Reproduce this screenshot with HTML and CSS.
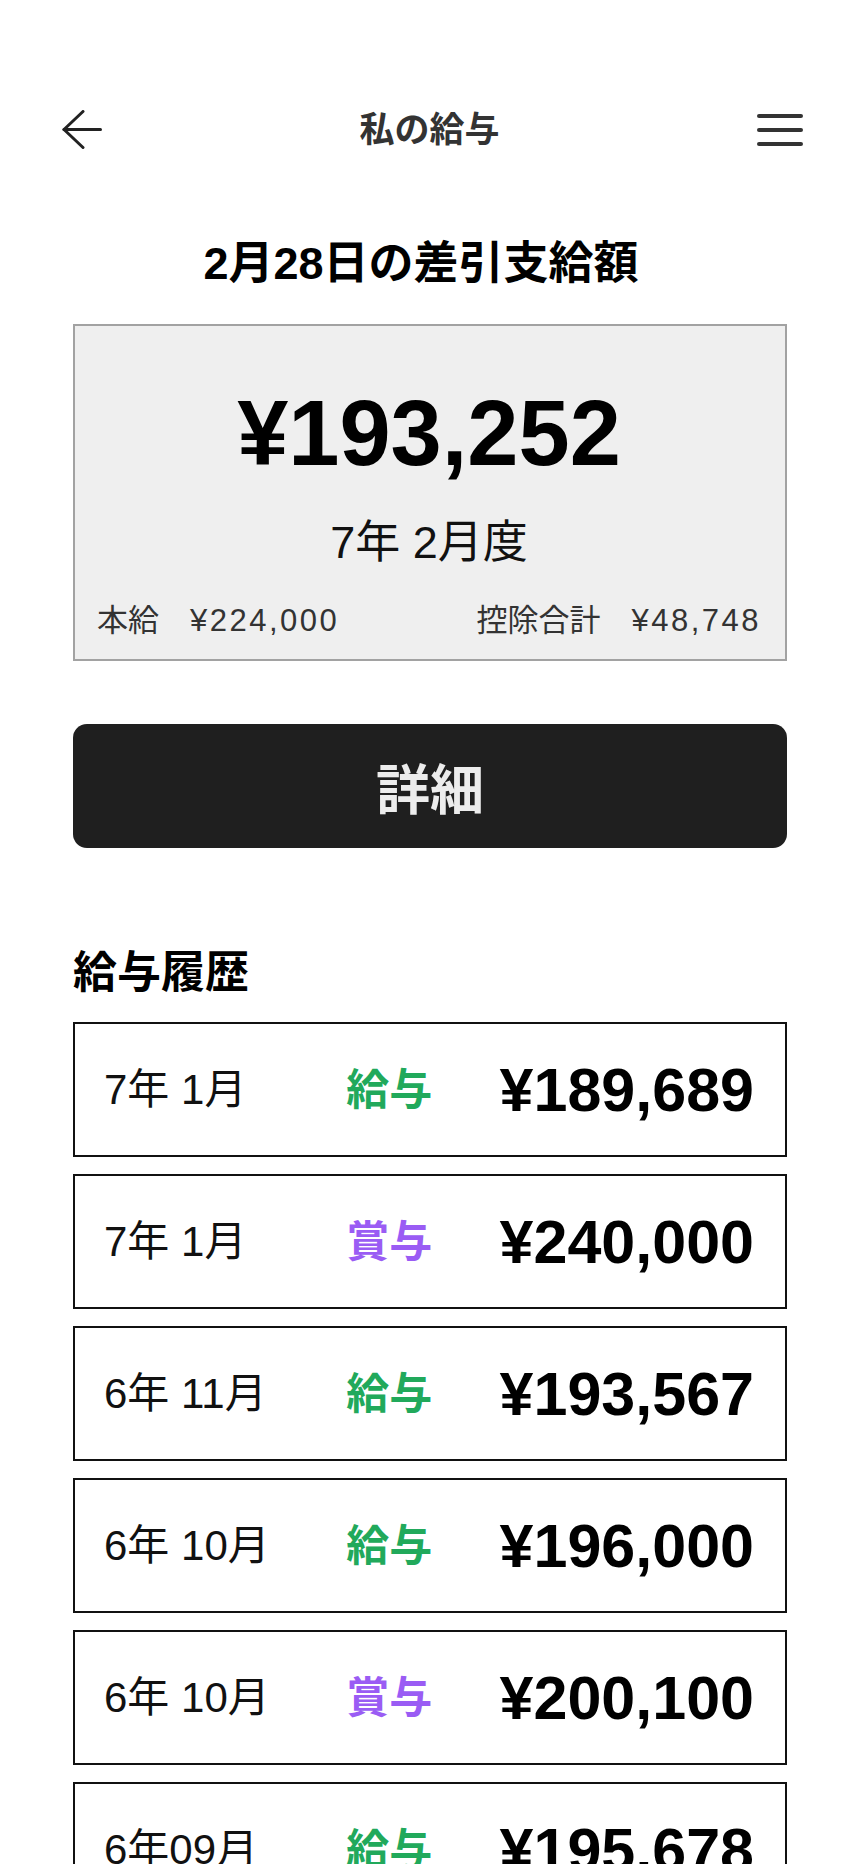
FILE: index.html
```html
<!DOCTYPE html>
<html lang="ja">
<head>
<meta charset="utf-8">
<title>私の給与</title>
<link rel="stylesheet" href="styles.css">
</head>
<body>
<header class="topbar">
  <button class="icon-btn" aria-label="戻る">
    <svg class="icon-back" width="40" height="40" viewBox="0 0 40 40" fill="none" stroke="#222" stroke-width="3" stroke-linecap="round" stroke-linejoin="round">
      <path d="M2 19.5H38.5"/>
      <path d="M21 1.5L2 19.5L21 37.5"/>
    </svg>
  </button>
  <h1 class="title">私の給与</h1>
  <button class="icon-btn" aria-label="メニュー">
    <svg class="icon-menu" width="46" height="32" viewBox="0 0 46 32" fill="none" stroke="#333" stroke-width="4" stroke-linecap="round">
      <path d="M2 2H44"/>
      <path d="M2 16H44"/>
      <path d="M2 30H44"/>
    </svg>
  </button>
</header>

<main class="content">
  <h2 class="pay-heading">2月28日の差引支給額</h2>

  <section class="summary-card">
    <div class="net-amount">¥193,252</div>
    <div class="period">7年 2月度</div>
    <div class="breakdown">
      <span class="breakdown-item">本給　<span class="num">¥224,000</span></span>
      <span class="breakdown-item">控除合計　<span class="num">¥48,748</span></span>
    </div>
  </section>

  <button class="detail-btn">詳細</button>

  <h2 class="history-heading">給与履歴</h2>

  <ul class="history-list">
    <li class="history-row">
      <span class="row-date">7年 1月</span>
      <span class="row-type salary">給与</span>
      <span class="row-amount">¥189,689</span>
    </li>
    <li class="history-row">
      <span class="row-date">7年 1月</span>
      <span class="row-type bonus">賞与</span>
      <span class="row-amount">¥240,000</span>
    </li>
    <li class="history-row">
      <span class="row-date">6年 11月</span>
      <span class="row-type salary">給与</span>
      <span class="row-amount">¥193,567</span>
    </li>
    <li class="history-row">
      <span class="row-date">6年 10月</span>
      <span class="row-type salary">給与</span>
      <span class="row-amount">¥196,000</span>
    </li>
    <li class="history-row">
      <span class="row-date">6年 10月</span>
      <span class="row-type bonus">賞与</span>
      <span class="row-amount">¥200,100</span>
    </li>
    <li class="history-row">
      <span class="row-date">6年09月</span>
      <span class="row-type salary">給与</span>
      <span class="row-amount">¥195,678</span>
    </li>
  </ul>
</main>
</body>
</html>
```

FILE: styles.css
```css
* {
  box-sizing: border-box;
}

html, body {
  margin: 0;
  padding: 0;
  background: #ffffff;
}

body {
  font-family: "Liberation Sans", "Noto Sans CJK JP", sans-serif;
  color: #111;
}

/* ---------- header ---------- */
.topbar {
  display: flex;
  align-items: center;
  height: 170px;
  padding: 90px 57px 0 62px;
}

.icon-btn {
  border: 0;
  background: none;
  padding: 0;
  margin: 0;
  display: flex;
  align-items: center;
  cursor: pointer;
}

.icon-back,
.icon-menu {
  display: block;
}

.title {
  flex: 1;
  margin: 0;
  text-align: center;
  font-size: 35px;
  line-height: 40px;
  font-weight: 700;
  color: #333;
}

/* ---------- content ---------- */
.content {
  width: 714px;
  margin: 0 auto;
}

.pay-heading {
  margin: 68px 0 0;
  padding-right: 18px;
  text-align: center;
  font-size: 45px;
  line-height: 52px;
  font-weight: 700;
  color: #000;
}

.summary-card {
  margin-top: 34px;
  background: #efefef;
  border: 2px solid #a2a2a2;
  padding: 61px 24px 23px 22px;
  display: flex;
  flex-direction: column;
  align-items: center;
}

.net-amount {
  font-size: 92px;
  line-height: 92px;
  font-weight: 700;
  color: #000;
}

.period {
  margin-top: 41px;
  font-size: 45px;
  line-height: 46px;
  color: #111;
}

.breakdown {
  margin-top: 40px;
  align-self: stretch;
  display: flex;
  justify-content: space-between;
  font-size: 31px;
  line-height: 30px;
  color: #333;
}

.breakdown .num {
  letter-spacing: 2.5px;
}

.detail-btn {
  display: block;
  width: 100%;
  height: 124px;
  margin-top: 63px;
  border: 0;
  border-radius: 14px;
  background: #1f1f1f;
  color: #ececec;
  font-family: inherit;
  font-size: 54px;
  font-weight: 700;
  cursor: pointer;
}

.history-heading {
  margin: 99px 0 0;
  font-size: 44px;
  line-height: 52px;
  font-weight: 700;
  color: #000;
}

.history-list {
  list-style: none;
  margin: 23px 0 0;
  padding: 0;
}

.history-row {
  height: 135px;
  margin-bottom: 17px;
  border: 2px solid #111;
  padding: 0 31px 0 29px;
  display: flex;
  align-items: center;
  justify-content: space-between;
}

.row-date {
  min-width: 175px;
  font-size: 42px;
  line-height: 44px;
  color: #111;
}

.row-type {
  font-size: 43px;
  line-height: 44px;
  font-weight: 700;
}

.row-type.salary {
  color: #21a95b;
}

.row-type.bonus {
  color: #9a5cf4;
}

.row-amount {
  font-size: 61px;
  line-height: 60px;
  font-weight: 700;
  color: #000;
}
```
